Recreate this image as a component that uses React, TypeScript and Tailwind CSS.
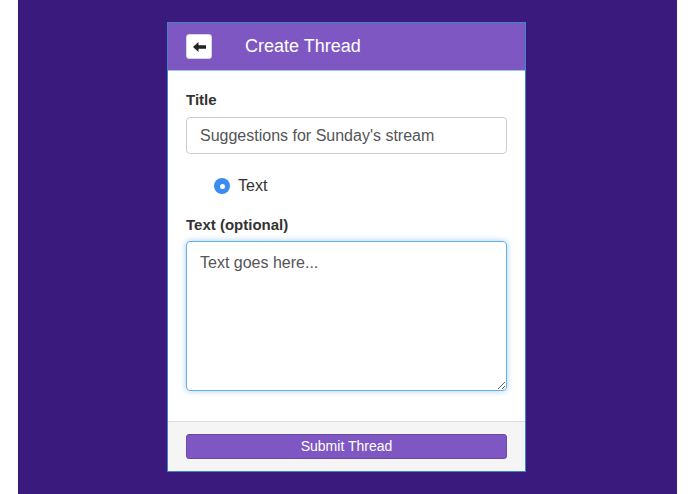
import * as React from "react";

const font = { fontFamily: '"Liberation Sans", Arial, sans-serif' };

const BackArrow: React.FC = () => (
  <svg width="13" height="10" viewBox="0 0 13 10" fill="#222">
    <path d="M0 5 L5.5 0 V3.2 H13 V6.8 H5.5 V10 Z" />
  </svg>
);

const CreateThread: React.FC = () => {
  return (
    <div className="mr-[2px] w-[359px] border border-[#3a86c8] bg-white">
      <div className="flex h-[48px] items-center border-b border-[#9cc7ec] bg-[#7e57c2] pl-[18px]">
        <button className="flex h-[25px] w-[26px] items-center justify-center rounded-[3px] border border-[#d6d6d6] bg-white">
          <BackArrow />
        </button>
        <span className="ml-[33px] text-[18px] text-white">Create Thread</span>
      </div>
      <div className="px-[18px] pt-[20px] pb-[30px]">
        <label className="block text-[15px] font-bold leading-[18px] text-[#333]">
          Title
        </label>
        <input
          className="mt-[8px] block h-[37px] w-full rounded-[4px] border border-[#cccccc] px-[13px] text-[16px] text-[#555] outline-none"
          defaultValue="Suggestions for Sunday's stream"
        />
        <div className="mt-[23px] flex items-center pl-[28px]">
          <span className="flex h-[16px] w-[16px] items-center justify-center rounded-full bg-[#3b8cf1]">
            <span className="h-[5px] w-[5px] rounded-full bg-white" />
          </span>
          <span className="ml-[8px] text-[16px] leading-[18px] text-[#333]">Text</span>
        </div>
        <label className="mt-[21px] block text-[15px] font-bold leading-[18px] text-[#333]">
          Text (optional)
        </label>
        <textarea
          className="mt-[7px] block h-[150px] w-full rounded-[4px] border border-[#66afe9] px-[13px] py-[9px] text-[16px] text-[#555] shadow-[0_0_6px_rgba(102,175,233,0.6)] outline-none placeholder:text-[#555]"
          placeholder="Text goes here..."
          style={font}
        />
      </div>
      <div className="border-t border-[#dddddd] bg-[#f5f5f5] px-[18px] pt-[12px] pb-[12px]">
        <button className="block h-[25px] w-full rounded-[3px] border border-[#6d48ad] bg-[#7e57c2] text-[14px] text-white">
          Submit Thread
        </button>
      </div>
    </div>
  );
};

export default function App() {
  return (
    <div className="h-[494px] bg-white px-[18px]" style={font}>
      <div className="flex h-full items-start justify-center bg-[#3b1a7e] pt-[22px]">
        <CreateThread />
      </div>
    </div>
  );
}
